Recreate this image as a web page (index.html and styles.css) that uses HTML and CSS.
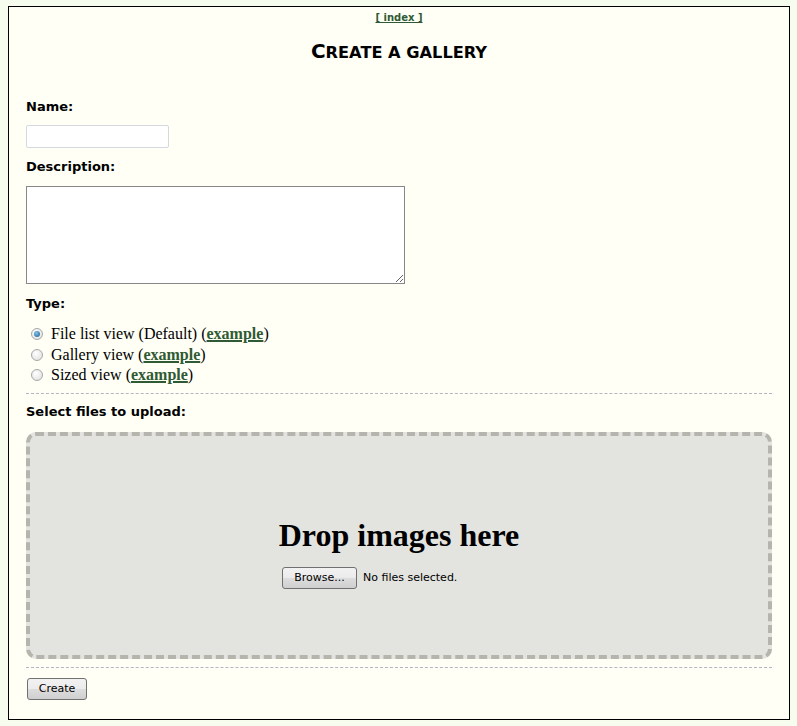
FILE: index.html
```html
<!DOCTYPE html>
<html lang="en">
<head>
    <meta charset="UTF-8">
    <title>Create a gallery</title>
    <link rel="stylesheet" href="styles.css">
</head>
<body>
    <div class="page">
        <div class="nav"><a href="#">[ index ]</a></div>
        <h1>C<span class="sc">reate a gallery</span></h1>

        <form class="gallery-form">
            <label class="field-label" for="name">Name:</label>
            <input type="text" id="name" class="name-input">

            <label class="field-label" for="desc">Description:</label>
            <textarea id="desc" class="desc-input"></textarea>

            <div class="field-label">Type:</div>
            <div class="types">
                <label class="type-row"><input type="radio" name="type" checked> File list view (Default) (<a href="#">example</a>)</label>
                <label class="type-row"><input type="radio" name="type"> Gallery view (<a href="#">example</a>)</label>
                <label class="type-row"><input type="radio" name="type"> Sized view (<a href="#">example</a>)</label>
            </div>

            <hr class="sep">

            <div class="field-label">Select files to upload:</div>
            <div class="dropzone">
                <div class="drop-title">Drop images here</div>
                <div class="file-row">
                    <button type="button" class="btn btn-browse">Browse...</button>
                    <span class="file-status">No files selected.</span>
                </div>
            </div>

            <hr class="sep sep-bottom">

            <button type="button" class="btn btn-create">Create</button>
        </form>
    </div>
</body>
</html>
```

FILE: styles.css
```css
body {
    margin: 6px 7px 0 8px;
    background: #f6fdee;
    font-family: "Liberation Sans", Arial, sans-serif;
    color: #000;
}

.page {
    border: 1px solid #000;
    background: #fffff6;
    padding: 0 17px 19px 17px;
}

.nav {
    text-align: center;
    padding-top: 5px;
    line-height: 12px;
    font-family: "DejaVu Sans", Verdana, sans-serif;
    font-size: 10px;
    font-weight: bold;
}

a {
    color: #2f5a33;
    font-weight: bold;
    text-decoration: underline;
}

h1 {
    margin: 16px 0 0 0;
    text-align: center;
    font-family: "DejaVu Sans", Verdana, sans-serif;
    font-size: 20px;
    line-height: 22px;
    font-weight: bold;
}

h1 .sc {
    font-size: 16.2px;
    text-transform: uppercase;
}

.gallery-form {
    display: flex;
    flex-direction: column;
    align-items: flex-start;
}

.field-label {
    display: block;
    font-family: "DejaVu Sans", Verdana, sans-serif;
    font-size: 13px;
    font-weight: bold;
    line-height: 18px;
    margin-top: 11px;
}

.gallery-form > .field-label:first-child {
    margin-top: 34px;
}

.name-input {
    box-sizing: border-box;
    width: 143px;
    height: 23px;
    margin: 9px 0 0 0;
    border: 1px solid #d4d8e0;
    border-radius: 2px;
    background: #fff;
}

.name-input + .field-label {
    margin-top: 10px;
}

.desc-input {
    box-sizing: border-box;
    width: 379px;
    height: 98px;
    margin: 10px 0 0 0;
    border: 1px solid #888;
    background: #fff;
    resize: both;
}

.types {
    margin-top: 11px;
    font-family: "Liberation Serif", "Times New Roman", serif;
    font-size: 16px;
    line-height: 20.5px;
}

.type-row {
    display: flex;
    align-items: center;
    white-space: pre;
}

.type-row input {
    appearance: none;
    width: 12px;
    height: 12px;
    margin: 0 4px 0 5px;
    border: 1px solid #a8a8a8;
    border-radius: 50%;
    background: radial-gradient(circle at 40% 35%, #fff, #dcdcdc);
    position: relative;
}

.type-row input:checked::after {
    content: "";
    position: absolute;
    left: 2px;
    top: 2px;
    width: 6px;
    height: 6px;
    border-radius: 50%;
    background: radial-gradient(circle at 40% 35%, #7fc4ec, #1b5b8c);
}

.type-row a {
    text-decoration-thickness: 2px;
    text-underline-offset: 1px;
}

.sep {
    align-self: stretch;
    border: none;
    border-top: 1px dashed #b4b4c2;
    margin: 7px 0 0 0;
}

.sep + .field-label {
    margin-top: 9px;
}

.dropzone {
    box-sizing: border-box;
    align-self: stretch;
    height: 227px;
    margin-top: 11px;
    border: 4px dashed #b5b5ad;
    border-radius: 10px;
    background: #e3e3df;
    padding-top: 81px;
    text-align: center;
}

.drop-title {
    font-family: "Liberation Serif", "Times New Roman", serif;
    font-size: 32px;
    font-weight: bold;
    line-height: 36px;
}

.file-row {
    display: inline-flex;
    align-items: center;
    gap: 6px;
    width: 234px;
    margin-top: 14px;
    font-family: "DejaVu Sans", Tahoma, sans-serif;
    font-size: 11px;
}

.btn {
    box-sizing: border-box;
    height: 22px;
    padding: 0;
    border: 1px solid #707070;
    border-radius: 3px;
    background: linear-gradient(#f2f2f2 0%, #ebebeb 50%, #dddddd 51%, #cfcfcf 100%);
    font-family: "DejaVu Sans", Tahoma, sans-serif;
    font-size: 11px;
    color: #000;
}

.btn-browse {
    width: 75px;
}

.sep-bottom {
    margin-top: 8px;
}

.btn-create {
    margin: 10px 0 0 1px;
    width: 60px;
}
```
